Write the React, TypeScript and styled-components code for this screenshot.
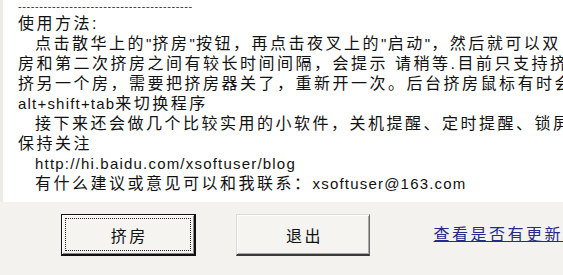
import React from "react";
import styled, { createGlobalStyle } from "styled-components";

const GlobalStyle = createGlobalStyle`
  html, body {
    margin: 0;
    padding: 0;
    background: #f3f2ee;
  }
  body {
    width: 563px;
    height: 275px;
    overflow: hidden;
  }
`;

const Dialog = styled.div`
  width: 563px;
  height: 275px;
  display: flex;
  flex-direction: column;
  background: #f3f2ee;
  font-family: "Liberation Sans", "Noto Sans CJK SC", sans-serif;
  color: #111;
  overflow: hidden;
`;

const TextArea = styled.div`
  height: 202px;
  flex: none;
  background: #ffffff;
  border-left: 3px solid #ecebe6;
  padding-left: 15px;
  overflow: hidden;
  box-sizing: border-box;
`;

const DashLine = styled.div`
  height: 14px;
  line-height: 12px;
  font-size: 11px;
  letter-spacing: 0.6px;
  color: #333;
  white-space: nowrap;
  overflow: hidden;
`;

const Line = styled.div<{ $indent?: boolean }>`
  height: 20px;
  line-height: 20px;
  font-size: 16px;
  letter-spacing: 2.5px;
  white-space: nowrap;
  overflow: hidden;
  padding-left: ${(p) => (p.$indent ? "17px" : "0")};
`;

const Latin = styled.span`
  font-size: 15px;
  letter-spacing: 1.2px;
`;

const ButtonBar = styled.div`
  display: flex;
  align-items: flex-start;
  padding-top: 12px;
  padding-left: 61px;
  gap: 40px;
`;

const Button = styled.div<{ $default?: boolean }>`
  width: 136px;
  height: 42px;
  box-sizing: border-box;
  display: flex;
  align-items: stretch;
  justify-content: stretch;
  background: #f5f4f1;
  font-size: 16px;
  letter-spacing: 2.5px;
  color: #111;
  ${(p) =>
    p.$default
      ? `
    border: 1px solid #111;
    border-right-width: 2px;
    border-bottom-width: 2px;
    box-shadow: inset 1px 1px 0 #ffffff, inset -1px -1px 0 #8a8a8a;
  `
      : `
    border-top: 1px solid #dcdbd6;
    border-left: 1px solid #dcdbd6;
    border-right: 1px solid #6a6a6a;
    border-bottom: 2px solid #3a3a3a;
    box-shadow: inset 1px 1px 0 #ffffff, inset -1px -1px 0 #a8a8a4;
  `}
`;

const ButtonFace = styled.span<{ $focused?: boolean }>`
  flex: 1;
  margin: ${(p) => (p.$focused ? "3px" : "0")};
  border: ${(p) => (p.$focused ? "1px dotted #222" : "none")};
  display: flex;
  align-items: center;
  justify-content: center;
  padding-left: 3px;
`;

const UpdateLink = styled.a`
  margin-left: 23px;
  margin-top: 11px;
  font-size: 16px;
  letter-spacing: 2.5px;
  line-height: 20px;
  color: #26298a;
  text-decoration: underline;
  white-space: nowrap;
  cursor: pointer;
`;

export default function App() {
  return (
    <>
      <GlobalStyle />
      <Dialog>
        <TextArea>
          <DashLine>{"-".repeat(41)}</DashLine>
          <Line>使用方法:</Line>
          <Line $indent>
            点击散华上的<Latin>"</Latin>挤房<Latin>"</Latin>按钮，再点击夜叉上的<Latin>"</Latin>启动<Latin>"</Latin>，然后就可以双
          </Line>
          <Line>房和第二次挤房之间有较长时间间隔，会提示 请稍等.目前只支持挤</Line>
          <Line>挤另一个房，需要把挤房器关了，重新开一次。后台挤房鼠标有时会</Line>
          <Line>
            <Latin>alt+shift+tab</Latin>来切换程序
          </Line>
          <Line $indent>接下来还会做几个比较实用的小软件，关机提醒、定时提醒、锁屏</Line>
          <Line>保持关注</Line>
          <Line $indent>
            <Latin>http://hi.baidu.com/xsoftuser/blog</Latin>
          </Line>
          <Line $indent>
            有什么建议或意见可以和我联系：<Latin>xsoftuser@163.com</Latin>
          </Line>
        </TextArea>
        <ButtonBar>
          <Button $default>
            <ButtonFace $focused>挤房</ButtonFace>
          </Button>
          <Button>
            <ButtonFace>退出</ButtonFace>
          </Button>
          <UpdateLink>查看是否有更新</UpdateLink>
        </ButtonBar>
      </Dialog>
    </>
  );
}
